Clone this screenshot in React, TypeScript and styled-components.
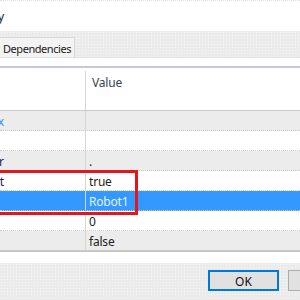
import React from "react";
import styled, { createGlobalStyle } from "styled-components";

const GlobalStyle = createGlobalStyle`
  html, body {
    margin: 0;
    padding: 0;
    background: #ffffff;
  }
  body {
    font-family: "Noto Sans", "Open Sans", Arial, sans-serif;
    font-size: 12px;
  }
`;

const texture = `
  background-color: #ebebeb;
  background-image: radial-gradient(#f7f7f7 0.7px, transparent 0.9px);
  background-size: 3px 3px;
`;

const Root = styled.div`
  position: relative;
  width: 300px;
  height: 300px;
  overflow: hidden;
  display: flex;
  flex-direction: column;
  background: #ffffff;
`;

const TitleBar = styled.div`
  height: 30px;
  border-top: 1px dotted #e2e2e2;
  display: flex;
  align-items: center;
`;

// text that runs off the left edge: its end sits a few pixels in
const Clip = styled.div<{ $w: number }>`
  width: ${(p) => p.$w}px;
  flex: none;
  display: flex;
  justify-content: flex-end;
  white-space: nowrap;
`;

const TitleText = styled.span`
  color: #222;
  font-size: 12px;
  letter-spacing: -0.2px;
`;

const TabStrip = styled.div`
  ${texture}
  height: 27px;
  box-sizing: border-box;
  padding-top: 7px;
  border-bottom: 1px solid #e2e2e2;
  display: flex;
  align-items: flex-end;
`;

const Tab = styled.div`
  height: 20px;
  box-sizing: border-box;
  margin-left: -1px;
  padding: 1px 3px 0 3px;
  background: #f3f3f3;
  border: 1px solid #d9d9d9;
  border-bottom: none;
  display: flex;
  align-items: center;
  color: #1a1a1a;
  font-size: 11px;
  letter-spacing: -0.45px;
`;

const Panel = styled.div`
  padding-top: 8px;
  height: 195px;
  box-sizing: border-box;
  background: #ffffff;
`;

const Grid = styled.div`
  border-top: 2px solid #c6c9cf;
  border-bottom: 1px solid #c4c4c4;
`;

const Row = styled.div<{ $bg: string; $line?: string }>`
  display: flex;
  height: 20px;
  box-sizing: border-box;
  background: ${(p) => p.$bg};
  border-bottom: 1px ${(p) => p.$line || "dotted"} #cacaca;
`;

const HeaderRow = styled.div`
  display: flex;
  height: 23px;
  padding-top: 3px;
  box-sizing: border-box;
`;

const NameCell = styled.div<{ $color?: string }>`
  width: 86px;
  flex: none;
  border-right: 1px solid #d6d6d6;
  display: flex;
  align-items: center;
  padding-top: 2px;
  box-sizing: border-box;
  overflow: hidden;
  color: ${(p) => p.$color || "#1c1c50"};
  font-size: 12px;
`;

const ValueCell = styled.div<{ $color?: string; $pad?: number }>`
  flex: 1;
  display: flex;
  align-items: center;
  padding-left: ${(p) => p.$pad ?? 3}px;
  padding-top: 2px;
  color: ${(p) => p.$color || "#222"};
  font-size: 12px;
  letter-spacing: -0.2px;
  white-space: nowrap;
`;

const Spacer = styled.div`
  height: 10px;
  background: #ffffff;
`;

const Footer = styled.div`
  ${texture}
  flex: 1;
  display: flex;
  gap: 9px;
  padding: 7px 0 0 208px;
`;

const Button = styled.div<{ $default?: boolean }>`
  flex: none;
  width: 71px;
  height: 21px;
  box-sizing: border-box;
  background: #e1e1e1;
  border: ${(p) => (p.$default ? "2px solid #0078d7" : "1px solid #adadad")};
  display: flex;
  align-items: center;
  justify-content: center;
  padding-top: 1px;
  color: #111;
  font-size: 12px;
`;

const Highlight = styled.div`
  position: absolute;
  left: -10px;
  top: 170px;
  width: 148px;
  height: 45px;
  box-sizing: border-box;
  border: 3px solid #e8141c;
  pointer-events: none;
`;

type Prop = {
  name: string;
  value: string;
  bg: string;
  edge: number;
  nameColor?: string;
  selected?: boolean;
};

const rows: Prop[] = [
  { name: "", value: "", bg: "#ffffff", edge: 0 },
  { name: "Index", value: "", bg: "#ececec", edge: 4, nameColor: "#4a8fd8" },
  { name: "", value: "", bg: "#ffffff", edge: 0 },
  { name: "Delimiter", value: ".", bg: "#ececec", edge: 4 },
  { name: "Text", value: "true", bg: "#ffffff", edge: 4 },
  { name: "Name", value: "Robot1", bg: "#3399ff", edge: 0, selected: true },
  { name: "Skip", value: "0", bg: "#ffffff", edge: 0 },
  { name: "Quote", value: "false", bg: "#ececec", edge: 0 },
];

const App = () => {
  return (
    <Root>
      <GlobalStyle />
      <TitleBar>
        <Clip $w={4}>
          <TitleText>Property</TitleText>
        </Clip>
      </TitleBar>
      <TabStrip>
        <Tab>Dependencies</Tab>
      </TabStrip>
      <Panel>
        <Grid>
          <HeaderRow>
            <NameCell />
            <ValueCell $color="#3c4250" $pad={6}>
              Value
            </ValueCell>
          </HeaderRow>
          {rows.map((r, i) => (
            <Row
              key={i}
              $bg={r.bg}
              $line={i === 0 || i === rows.length - 1 ? "solid" : "dotted"}
            >
              <NameCell $color={r.selected ? "#ffffff" : r.nameColor}>
                <Clip $w={r.edge}>{r.name}</Clip>
              </NameCell>
              <ValueCell $color={r.selected ? "#e6f1ff" : undefined}>
                {r.value}
              </ValueCell>
            </Row>
          ))}
        </Grid>
      </Panel>
      <Spacer />
      <Footer>
        <Button $default>OK</Button>
        <Button>Cancel</Button>
      </Footer>
      <Highlight />
    </Root>
  );
};

export default App;
